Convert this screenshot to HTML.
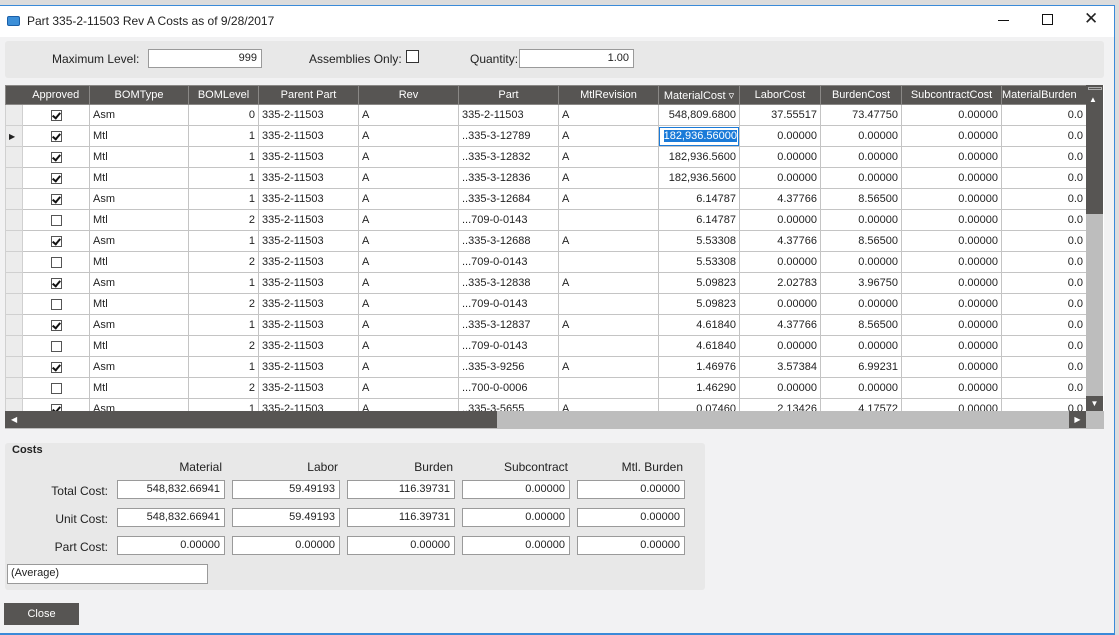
<!DOCTYPE html><html><head><style>
*{box-sizing:border-box;margin:0;padding:0}
body{width:1119px;height:635px;background:#dcdcdc;font-family:"Liberation Sans",sans-serif;font-size:11px;color:#222;position:relative;overflow:hidden}
.win{position:absolute;left:0;top:5px;width:1115px;height:630px;background:#f2f2f3;border-top:1px solid #3a8ad8;border-right:1px solid #3a8ad8}
.title{position:absolute;left:0;top:0;width:100%;height:31px;background:#fff;font-size:12px}
.abs{position:absolute}
.inp{position:absolute;background:#fff;border:1px solid #9a9a9a;text-align:right;padding-right:4px;font-size:11px;line-height:17px}
table{border-collapse:collapse;position:absolute;left:5px;top:85px;table-layout:fixed}
th{background:#575553;color:#fff;font-weight:normal;height:19px;border:1px solid #8a8886;font-size:11px;white-space:nowrap;overflow:hidden}
td{height:21px;border:1px solid #c4c4c4;background:#fff;padding:0 3px;white-space:nowrap;overflow:hidden}
td.sel{background:#ececec;border-color:#d0d0d0}
td.r{text-align:right}
.cb{display:inline-block;width:11px;height:11px;border:1px solid #555;position:relative;vertical-align:middle}
.cb.c::after{content:"";position:absolute;left:2px;top:0px;width:3px;height:6px;border:solid #111;border-width:0 2px 2px 0;transform:rotate(40deg)}
td.ck{text-align:center}
.hl{background:#fff;padding:0}
.hl span{display:block;border:1px solid #1a7ad8;height:19px;line-height:17px;text-align:right;padding-right:1px}
.hl b{font-weight:normal;background:#1a7ad8;color:#fff}
</style></head><body>
<div class="win">
<div class="title">
<div class="abs" style="left:7px;top:10px;width:13px;height:10px;background:#3c8fd8;border-radius:2px;border:1px solid #1a5fa8"></div>
<div class="abs" style="left:27px;top:8px">Part 335-2-11503 Rev A Costs as of 9/28/2017</div>
<div class="abs" style="left:998px;top:14px;width:11px;height:1px;background:#111"></div>
<div class="abs" style="left:1042px;top:8px;width:11px;height:11px;border:1px solid #111"></div>
<div class="abs" style="left:1084px;top:4px;font-size:17px;line-height:17px">✕</div>
</div>
<div class="abs" style="left:5px;top:35px;width:1099px;height:37px;background:#e8e8e8;border-radius:3px"></div>
<div class="abs" style="left:52px;top:46px;font-size:12px">Maximum Level:</div>
<div class="inp" style="left:148px;top:43px;width:114px;height:19px">999</div>
<div class="abs" style="left:309px;top:46px;font-size:12px">Assemblies Only:</div>
<div class="abs" style="left:406px;top:44px;width:13px;height:13px;border:1px solid #333;background:#fff"></div>
<div class="abs" style="left:470px;top:46px;font-size:12px">Quantity:</div>
<div class="inp" style="left:519px;top:43px;width:115px;height:19px">1.00</div>
</div>
<div class="abs" style="left:5px;top:85px;width:1099px;height:344px;overflow:hidden;background:#fff">
<table style="left:0;top:0">
<colgroup><col style="width:17px"><col style="width:67px"><col style="width:99px"><col style="width:70px"><col style="width:100px"><col style="width:100px"><col style="width:100px"><col style="width:100px"><col style="width:81px"><col style="width:81px"><col style="width:81px"><col style="width:100px"><col style="width:85px"></colgroup>
<tr><th style="border-right:none"></th><th style="border-left:none">Approved</th><th>BOMType</th><th>BOMLevel</th><th>Parent Part</th><th>Rev</th><th>Part</th><th>MtlRevision</th><th>MaterialCost ▿</th><th>LaborCost</th><th>BurdenCost</th><th>SubcontractCost</th><th style="text-align:left">MaterialBurden</th></tr>
<tr><td class="sel"></td><td class="ck"><span class="cb c"></span></td><td>Asm</td><td class="r">0</td><td>335-2-11503</td><td>A</td><td>335-2-11503</td><td>A</td><td class="r">548,809.6800</td><td class="r">37.55517</td><td class="r">73.47750</td><td class="r">0.00000</td><td class="r">0.0</td></tr>
<tr><td class="sel" style="font-size:8px">▶</td><td class="ck"><span class="cb c"></span></td><td>Mtl</td><td class="r">1</td><td>335-2-11503</td><td>A</td><td>..335-3-12789</td><td>A</td><td class="hl"><span><b>182,936.56000</b></span></td><td class="r">0.00000</td><td class="r">0.00000</td><td class="r">0.00000</td><td class="r">0.0</td></tr>
<tr><td class="sel"></td><td class="ck"><span class="cb c"></span></td><td>Mtl</td><td class="r">1</td><td>335-2-11503</td><td>A</td><td>..335-3-12832</td><td>A</td><td class="r">182,936.5600</td><td class="r">0.00000</td><td class="r">0.00000</td><td class="r">0.00000</td><td class="r">0.0</td></tr>
<tr><td class="sel"></td><td class="ck"><span class="cb c"></span></td><td>Mtl</td><td class="r">1</td><td>335-2-11503</td><td>A</td><td>..335-3-12836</td><td>A</td><td class="r">182,936.5600</td><td class="r">0.00000</td><td class="r">0.00000</td><td class="r">0.00000</td><td class="r">0.0</td></tr>
<tr><td class="sel"></td><td class="ck"><span class="cb c"></span></td><td>Asm</td><td class="r">1</td><td>335-2-11503</td><td>A</td><td>..335-3-12684</td><td>A</td><td class="r">6.14787</td><td class="r">4.37766</td><td class="r">8.56500</td><td class="r">0.00000</td><td class="r">0.0</td></tr>
<tr><td class="sel"></td><td class="ck"><span class="cb"></span></td><td>Mtl</td><td class="r">2</td><td>335-2-11503</td><td>A</td><td>...709-0-0143</td><td></td><td class="r">6.14787</td><td class="r">0.00000</td><td class="r">0.00000</td><td class="r">0.00000</td><td class="r">0.0</td></tr>
<tr><td class="sel"></td><td class="ck"><span class="cb c"></span></td><td>Asm</td><td class="r">1</td><td>335-2-11503</td><td>A</td><td>..335-3-12688</td><td>A</td><td class="r">5.53308</td><td class="r">4.37766</td><td class="r">8.56500</td><td class="r">0.00000</td><td class="r">0.0</td></tr>
<tr><td class="sel"></td><td class="ck"><span class="cb"></span></td><td>Mtl</td><td class="r">2</td><td>335-2-11503</td><td>A</td><td>...709-0-0143</td><td></td><td class="r">5.53308</td><td class="r">0.00000</td><td class="r">0.00000</td><td class="r">0.00000</td><td class="r">0.0</td></tr>
<tr><td class="sel"></td><td class="ck"><span class="cb c"></span></td><td>Asm</td><td class="r">1</td><td>335-2-11503</td><td>A</td><td>..335-3-12838</td><td>A</td><td class="r">5.09823</td><td class="r">2.02783</td><td class="r">3.96750</td><td class="r">0.00000</td><td class="r">0.0</td></tr>
<tr><td class="sel"></td><td class="ck"><span class="cb"></span></td><td>Mtl</td><td class="r">2</td><td>335-2-11503</td><td>A</td><td>...709-0-0143</td><td></td><td class="r">5.09823</td><td class="r">0.00000</td><td class="r">0.00000</td><td class="r">0.00000</td><td class="r">0.0</td></tr>
<tr><td class="sel"></td><td class="ck"><span class="cb c"></span></td><td>Asm</td><td class="r">1</td><td>335-2-11503</td><td>A</td><td>..335-3-12837</td><td>A</td><td class="r">4.61840</td><td class="r">4.37766</td><td class="r">8.56500</td><td class="r">0.00000</td><td class="r">0.0</td></tr>
<tr><td class="sel"></td><td class="ck"><span class="cb"></span></td><td>Mtl</td><td class="r">2</td><td>335-2-11503</td><td>A</td><td>...709-0-0143</td><td></td><td class="r">4.61840</td><td class="r">0.00000</td><td class="r">0.00000</td><td class="r">0.00000</td><td class="r">0.0</td></tr>
<tr><td class="sel"></td><td class="ck"><span class="cb c"></span></td><td>Asm</td><td class="r">1</td><td>335-2-11503</td><td>A</td><td>..335-3-9256</td><td>A</td><td class="r">1.46976</td><td class="r">3.57384</td><td class="r">6.99231</td><td class="r">0.00000</td><td class="r">0.0</td></tr>
<tr><td class="sel"></td><td class="ck"><span class="cb"></span></td><td>Mtl</td><td class="r">2</td><td>335-2-11503</td><td>A</td><td>...700-0-0006</td><td></td><td class="r">1.46290</td><td class="r">0.00000</td><td class="r">0.00000</td><td class="r">0.00000</td><td class="r">0.0</td></tr>
<tr><td class="sel"></td><td class="ck"><span class="cb c"></span></td><td>Asm</td><td class="r">1</td><td>335-2-11503</td><td>A</td><td>..335-3-5655</td><td>A</td><td class="r">0.07460</td><td class="r">2.13426</td><td class="r">4.17572</td><td class="r">0.00000</td><td class="r">0.0</td></tr>
</table>
<div class="abs" style="left:1081px;top:0;width:17px;height:326px;background:#bdbdbd"></div>
<div class="abs" style="left:1081px;top:0;width:17px;height:129px;background:#575553"></div>
<div class="abs" style="left:1083px;top:2px;width:14px;height:3px;border:1px solid #aaa"></div>
<div class="abs" style="left:1084px;top:10px;color:#fff;font-size:8px">▲</div>
<div class="abs" style="left:1081px;top:311px;width:17px;height:15px;background:#575553;color:#fff;font-size:8px;text-align:center;line-height:15px">▼</div>
<div class="abs" style="left:0;top:326px;width:1099px;height:18px;background:#bdbdbd"></div>
<div class="abs" style="left:0;top:326px;width:492px;height:17px;background:#575553;color:#fff;font-size:8px;line-height:17px;padding-left:6px">◀</div>
<div class="abs" style="left:1064px;top:326px;width:17px;height:17px;background:#575553;color:#fff;font-size:8px;line-height:17px;text-align:center">▶</div>
</div>
<div class="abs" style="left:5px;top:443px;width:700px;height:147px;background:#e8e8e8;border-radius:3px"></div>
<div class="abs" style="left:12px;top:444px;font-weight:bold;font-size:11px">Costs</div>
<div class="abs" style="left:117px;top:460px;width:105px;text-align:right;font-size:12px">Material</div>
<div class="abs" style="left:232px;top:460px;width:106px;text-align:right;font-size:12px">Labor</div>
<div class="abs" style="left:347px;top:460px;width:106px;text-align:right;font-size:12px">Burden</div>
<div class="abs" style="left:462px;top:460px;width:106px;text-align:right;font-size:12px">Subcontract</div>
<div class="abs" style="left:577px;top:460px;width:106px;text-align:right;font-size:12px">Mtl. Burden</div>
<div class="abs" style="left:20px;top:484px;width:88px;text-align:right;font-size:12px">Total Cost:</div>
<div class="abs" style="left:20px;top:512px;width:88px;text-align:right;font-size:12px">Unit Cost:</div>
<div class="abs" style="left:20px;top:540px;width:88px;text-align:right;font-size:12px">Part Cost:</div>
<div class="inp" style="left:117px;top:480px;width:108px;height:19px">548,832.66941</div>
<div class="inp" style="left:232px;top:480px;width:108px;height:19px">59.49193</div>
<div class="inp" style="left:347px;top:480px;width:108px;height:19px">116.39731</div>
<div class="inp" style="left:462px;top:480px;width:108px;height:19px">0.00000</div>
<div class="inp" style="left:577px;top:480px;width:108px;height:19px">0.00000</div>
<div class="inp" style="left:117px;top:508px;width:108px;height:19px">548,832.66941</div>
<div class="inp" style="left:232px;top:508px;width:108px;height:19px">59.49193</div>
<div class="inp" style="left:347px;top:508px;width:108px;height:19px">116.39731</div>
<div class="inp" style="left:462px;top:508px;width:108px;height:19px">0.00000</div>
<div class="inp" style="left:577px;top:508px;width:108px;height:19px">0.00000</div>
<div class="inp" style="left:117px;top:536px;width:108px;height:19px">0.00000</div>
<div class="inp" style="left:232px;top:536px;width:108px;height:19px">0.00000</div>
<div class="inp" style="left:347px;top:536px;width:108px;height:19px">0.00000</div>
<div class="inp" style="left:462px;top:536px;width:108px;height:19px">0.00000</div>
<div class="inp" style="left:577px;top:536px;width:108px;height:19px">0.00000</div>
<div class="inp" style="left:7px;top:564px;width:201px;height:20px;text-align:left;padding-left:3px">(Average)</div>
<div class="abs" style="left:4px;top:603px;width:75px;height:22px;background:#575553;color:#fff;text-align:center;line-height:22px;font-size:11px">Close</div>
<div class="abs" style="left:0;top:633px;width:1115px;height:2px;background:#3a8ad8"></div>
</body></html>
